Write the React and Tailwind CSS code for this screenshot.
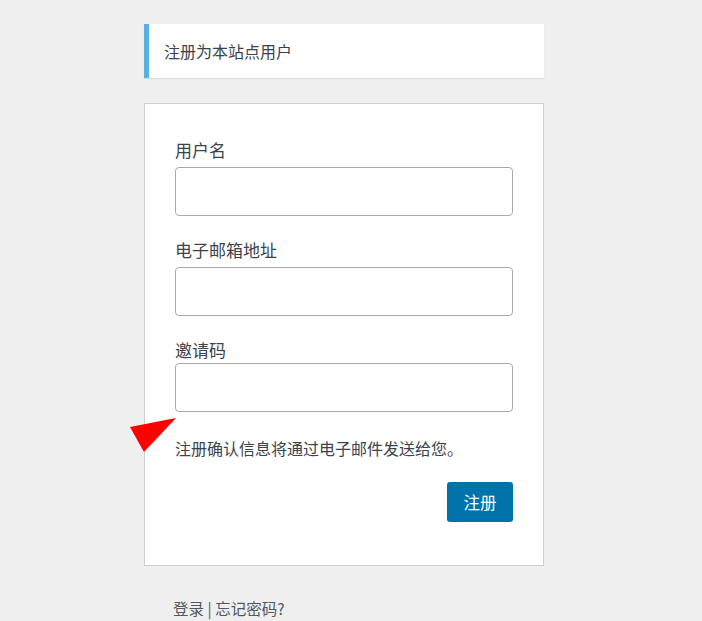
export default function App() {
  const font = { fontFamily: '"Noto Sans CJK SC", "Noto Sans", sans-serif' };
  return (
    <div className="relative min-h-[621px] w-full bg-[#efefef] text-[#3c434a]" style={font}>
      <div className="w-[400px] ml-[144px] pt-[24px]">
        <div className="h-[54px] flex items-center bg-white border-l-[5px] border-[#5aafe5] pl-[15px] shadow-[0_1px_1px_rgba(0,0,0,0.08)]">
          <span className="text-[16px] leading-none">注册为本站点用户</span>
        </div>
        <div className="mt-[25px] h-[463px] bg-white border border-[#cfcfcf] px-[30px] pt-[34px]">
          <div className="flex flex-col gap-[22px]">
            <div>
              <label className="block text-[17px] leading-[24px] mb-[5px]">用户名</label>
              <div className="h-[49px] w-[338px] rounded-[4px] border border-[#a7aaad] bg-white" />
            </div>
            <div>
              <label className="block text-[17px] leading-[24px] mb-[5px]">电子邮箱地址</label>
              <div className="h-[49px] w-[338px] rounded-[4px] border border-[#a7aaad] bg-white" />
            </div>
            <div>
              <label className="block text-[17px] leading-[24px] mb-[1px]">邀请码</label>
              <div className="h-[49px] w-[338px] rounded-[4px] border border-[#a7aaad] bg-white" />
            </div>
          </div>
          <p className="mt-[24px] text-[16px] leading-[24px]">注册确认信息将通过电子邮件发送给您。</p>
          <div className="flex justify-end mt-[22px]">
            <button className="h-[40px] w-[66px] rounded-[3px] bg-[#0073aa] text-white text-[16.5px] leading-none">注册</button>
          </div>
        </div>
        <div className="mt-[30px] pl-[29px] text-[15.5px] leading-[24px] text-[#50575e]">
          登录 | 忘记密码?
        </div>
      </div>
      <svg className="absolute left-0 top-0" width="702" height="621" style={{ pointerEvents: 'none' }}>
        <polygon points="130,427 176,418 144,452" fill="#ff0000" />
      </svg>
    </div>
  );
}
